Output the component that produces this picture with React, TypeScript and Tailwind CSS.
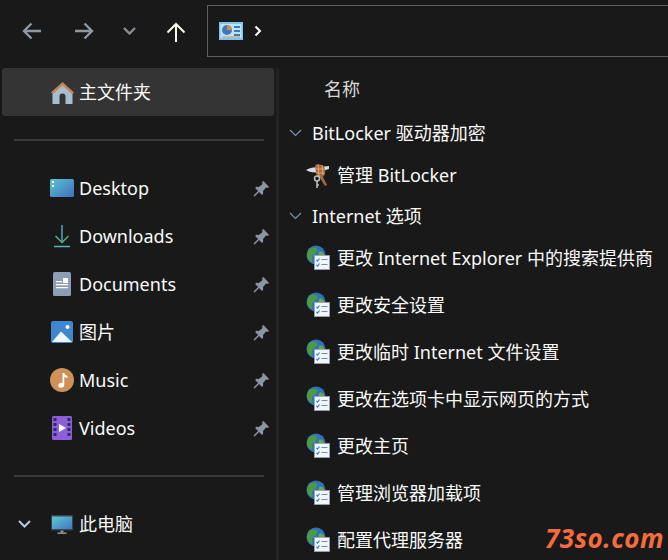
import React from "react";

const font = "[font-family:'Noto_Sans','Noto_Sans_CJK_SC',sans-serif]";

const Home = () => (
  <svg width="25" height="25" viewBox="0 0 25 25">
    <path d="M2.500 11.500v12.500h20V11.500L12.500 3z" fill="#a9bdd0" />
    <path d="M1 12.500 12.500 2 24 12.500 22 14 12.500 5.500 3 14z" fill="#c5874e" />
    <path d="M9.500 24v-7.500a3 3 0 0 1 6 0V24z" fill="#343434" />
  </svg>
);
const Desk = () => (
  <svg width="24" height="18" viewBox="0 0 24 18">
    <defs>
      <linearGradient id="dg" x1="0" y1="0" x2="1" y2="1">
        <stop offset="0" stopColor="#5cc3d0" />
        <stop offset="1" stopColor="#3f6fc0" />
      </linearGradient>
    </defs>
    <rect width="24" height="18" rx="1.500" fill="url(#dg)" />
    <rect x="2" y="2" width="2" height="2" fill="#fff" />
    <rect x="2" y="6" width="2" height="2" fill="#fff" />
  </svg>
);
const Down = () => (
  <svg width="18" height="24" viewBox="0 0 18 24" fill="none">
    <path d="M9 1v18" stroke="#4ba7c6" strokeWidth="1.500" />
    <path d="M2.500 12 9 18.500 15.500 12" stroke="#5cae7e" strokeWidth="1.500" />
    <path d="M1 22.500h16" stroke="#55b4b4" strokeWidth="1.500" />
  </svg>
);
const Doc = () => (
  <svg width="18" height="24" viewBox="0 0 18 24">
    <rect width="18" height="24" rx="1.500" fill="#8c9db4" />
    <path d="M3 9h6v1.200H3zM3 12h12v1.200H3zM3 15h12v1.200H3z" fill="#fff" />
    <rect x="10" y="6" width="5" height="5" fill="#fff" />
  </svg>
);
const Pic = () => (
  <svg width="22" height="22" viewBox="0 0 22 22">
    <rect width="22" height="22" rx="2" fill="#3f87cf" />
    <circle cx="16.500" cy="6" r="2" fill="#fff" />
    <path d="M1 21 10 10.500 21 21z" fill="#eef7fb" />
  </svg>
);
const Music = () => (
  <svg width="24" height="24" viewBox="0 0 24 24">
    <circle cx="12" cy="12" r="12" fill="#cf9157" />
    <path d="M12.500 5h1.800c.2 2 2 2.500 3.200 3v2c-1.300-.2-2.400-.7-3.200-1.300V16.500c0 2-1.500 3.300-3.300 3.300-1.500 0-2.700-1-2.700-2.400 0-1.500 1.400-2.600 3-2.600.4 0 .8 0 1.200.2z" fill="#fff" />
  </svg>
);
const Video = () => (
  <svg width="20" height="24" viewBox="0 0 20 24">
    <rect width="20" height="24" rx="1.500" fill="#8f5fd8" />
    {[2, 7, 12, 17].map((y) => (
      <React.Fragment key={y}>
        <rect x="1.500" y={y} width="3" height="3" fill="#2c2a6c" />
        <rect x="15.500" y={y} width="3" height="3" fill="#2c2a6c" />
      </React.Fragment>
    ))}
    <path d="M7 8v8l7-4z" fill="#fff" />
  </svg>
);
const Monitor = () => (
  <svg width="22" height="19" viewBox="0 0 22 19">
    <defs>
      <linearGradient id="mg" x1="0" y1="0" x2="1" y2="1">
        <stop offset="0" stopColor="#62c8d0" />
        <stop offset="1" stopColor="#3d78c4" />
      </linearGradient>
    </defs>
    <rect width="22" height="15.500" rx="1" fill="#3b4348" />
    <rect x="1" y="1.500" width="20" height="12.500" fill="url(#mg)" />
    <rect x="9.500" y="15.500" width="3" height="2" fill="#8b9298" />
    <rect x="6.500" y="17.500" width="9" height="1.300" fill="#a5abb0" />
  </svg>
);
const Pin = () => (
  <svg width="17" height="17" viewBox="0 0 16 16">
    <path d="M9.500.8 15.200 6.500 13.800 7.300 11.900 7.200 9.400 10.500 9.600 13 8.500 14 5.700 11.200 1.500 15.500.5 14.500 4.800 10.300 2 7.500 3 6.400 5.500 6.600 8.800 4.100 8.700 2.200z" fill="#8d96a0" />
  </svg>
);
const Globe = () => (
  <svg width="24" height="25" viewBox="0 0 24 25">
    <circle cx="10" cy="10" r="9.500" fill="#2f73b8" />
    <path d="M3 4c3-2 6-2 8 0 1 2-1 3-2 5-1 1-3 1-3 3 0 2 1 3 0 5-3-1-5-4-5-7 0-2 1-4 2-6z" fill="#4d9a46" />
    <path d="M13 7c2-1 4 0 5 2 0 2-1 4-3 4-2-1-3-4-2-6z" fill="#6aa84f" />
    <rect x="8.500" y="10.500" width="15" height="14" fill="#f1f4f8" stroke="#9aa6b2" strokeWidth="0.800" />
    <path d="M10.500 15l1 1 2-2.500M10.500 20l1 1 2-2.500" fill="none" stroke="#2d7fd6" strokeWidth="1.200" />
    <path d="M15.500 14.500h6M15.500 19.500h6" stroke="#7c8894" strokeWidth="1.200" />
  </svg>
);
const Keys = () => (
  <svg width="24" height="25" viewBox="0 0 24 25">
    <path d="M0 7c3-2 8-3 13-3l10-1v3l-10 3c-5 1-10 0-13-2z" fill="#d7dde4" />
    <path d="M12 1c-2 0-3 1-3 3l1 5 1 4 3 2 5 8 2-1-4-8 2-3c1-4 0-7-3-9z" fill="#a9683a" />
    <path d="M12 2l1 11M16 2l1 10M10 6h9M10 10h8" stroke="#dba776" strokeWidth="1" fill="none" />
    <circle cx="11" cy="15.500" r="2.500" fill="none" stroke="#b8bdc4" strokeWidth="1.500" />
    <path d="M11 18v7M11 22h2" stroke="#b8bdc4" strokeWidth="1.600" />
  </svg>
);

const Chevron = ({ color, w = 1.2 }: { color: string; w?: number }) => (
  <svg width="13" height="8" viewBox="0 0 13 8" fill="none">
    <path d="M1 1l5.500 5.500L12 1" stroke={color} strokeWidth={w} />
  </svg>
);

const SideRow = ({ icon, label, pin }: { icon: React.ReactNode; label: string; pin?: boolean }) => (
  <div className="flex h-12 items-center">
    <div className="flex w-[30px] shrink-0 justify-center">{icon}</div>
    <span className="ml-[2px] flex-1 text-[18px] leading-6 text-[#fafafa]">{label}</span>
    {pin && (
      <div className="mr-[6px] shrink-0">
        <Pin />
      </div>
    )}
  </div>
);

const GroupRow = ({ label }: { label: string }) => (
  <div className="flex h-[41.500px] items-center">
    <div className="ml-[10px] w-[23px]">
      <Chevron color="#7f93a8" />
    </div>
    <span className="text-[18px] leading-6 text-[#fafafa]">{label}</span>
  </div>
);

const ItemRow = ({ icon, label, h = "h-[47px]" }: { icon: React.ReactNode; label: string; h?: string }) => (
  <div className={`flex items-center ${h}`}>
    <div className="ml-[27px] flex w-[31px] shrink-0">{icon}</div>
    <span className="whitespace-nowrap text-[18px] leading-6 text-[#fafafa]">{label}</span>
  </div>
);

export default function App() {
  return (
    <div className={`relative flex h-[560px] w-[668px] flex-col overflow-hidden bg-[#191919] ${font}`}>
      <header className="flex h-[62px] shrink-0 items-start">
        <div className="flex h-[62px] w-[207px] items-center">
          <svg className="ml-[22px]" width="19" height="18" viewBox="0 0 19 18" fill="none">
            <path d="M19 9H2M9.500 1.500 2 9l7.500 7.500" stroke="#8f979f" strokeWidth="2.400" />
          </svg>
          <svg className="ml-[34px]" width="19" height="18" viewBox="0 0 19 18" fill="none">
            <path d="M0 9h17M9.500 1.500 17 9l-7.500 7.500" stroke="#8f979f" strokeWidth="2.400" />
          </svg>
          <div className="ml-[29px]">
            <Chevron color="#878e96" w={2.4} />
          </div>
          <svg className="ml-[30px] mt-[2px]" width="20" height="20" viewBox="0 0 20 20" fill="none">
            <path d="M10 20V2M1.500 10.500 10 2l8.500 8.500" stroke="#fbf8f0" strokeWidth="2" />
          </svg>
        </div>
        <div className="mt-[5px] flex h-[52px] flex-1 items-center border border-r-0 border-[#5f5f5f] pl-[11px]">
          <svg width="24" height="18" viewBox="0 0 24 18">
            <rect width="24" height="18" fill="#7cc4ec" />
            <rect x="1.500" y="2" width="21" height="14" fill="#bfe4f6" />
            <circle cx="8" cy="8" r="5" fill="#3b78c0" />
            <path d="M8 8V3a5 5 0 0 1 5 5z" fill="#d88a4e" />
            <path d="M15 4h6v2h-6zM15 8h6v2h-6zM15 12h6v2h-6z" fill="#3b78c0" />
            <path d="M3 15h18" stroke="#d88a4e" />
          </svg>
          <svg className="ml-[11px]" width="8" height="12" viewBox="0 0 8 12" fill="none">
            <path d="M1.500 1.500 6 6l-4.500 4.500" stroke="#fff" strokeWidth="2" />
          </svg>
        </div>
      </header>

      <div className="mt-[6px] flex min-h-0 flex-1">
        <aside className="w-[279px] shrink-0 border-r-[3px] border-[#242222] pl-[2px]">
          <div className="mr-[2px] h-12 rounded-[3px] bg-[#343434] pl-[48px]">
            <div className="flex h-12 items-center">
              <Home />
              <span className="ml-[4px] text-[18px] leading-6 text-[#fafafa]">主文件夹</span>
            </div>
          </div>
          <div className="mx-[12px] mb-[23px] mt-[23px] h-[2px] bg-[#3a3a3a]" />
          <div className="pl-[45px]">
            <SideRow icon={<Desk />} label="Desktop" pin />
            <SideRow icon={<Down />} label="Downloads" pin />
            <SideRow icon={<Doc />} label="Documents" pin />
            <SideRow icon={<Pic />} label="图片" pin />
            <SideRow icon={<Music />} label="Music" pin />
            <SideRow icon={<Video />} label="Videos" pin />
          </div>
          <div className="mx-[12px] mb-[23px] mt-[23px] h-[2px] bg-[#3a3a3a]" />
          <div className="flex h-12 items-center">
            <div className="ml-[16px] w-[27px]">
              <Chevron color="#b9c9dc" w={2} />
            </div>
            <div className="flex w-[33px] shrink-0 justify-center">
              <Monitor />
            </div>
            <span className="ml-[1px] text-[18px] leading-6 text-[#fafafa]">此电脑</span>
          </div>
        </aside>

        <main className="min-w-0 flex-1 overflow-hidden">
          <div className="flex h-[44px] items-center pb-[2px] pl-[45px] text-[18px] leading-6 text-[#d9d9d9]">名称</div>
          <GroupRow label="BitLocker 驱动器加密" />
          <ItemRow icon={<Keys />} label="管理 BitLocker" h="h-[41.500px] pt-[1.500px]" />
          <GroupRow label="Internet 选项" />
          <ItemRow icon={<Globe />} label="更改 Internet Explorer 中的搜索提供商" h="h-[44.500px] pb-[2.500px]" />
          <ItemRow icon={<Globe />} label="更改安全设置" />
          <ItemRow icon={<Globe />} label="更改临时 Internet 文件设置" />
          <ItemRow icon={<Globe />} label="更改在选项卡中显示网页的方式" />
          <ItemRow icon={<Globe />} label="更改主页" />
          <ItemRow icon={<Globe />} label="管理浏览器加载项" />
          <ItemRow icon={<Globe />} label="配置代理服务器" />
        </main>
      </div>

      <span className="absolute bottom-[6px] right-[4px] text-[26px] font-bold italic leading-8 tracking-[0.5px] text-[#f56c3e]">
        73so.com
      </span>
    </div>
  );
}
